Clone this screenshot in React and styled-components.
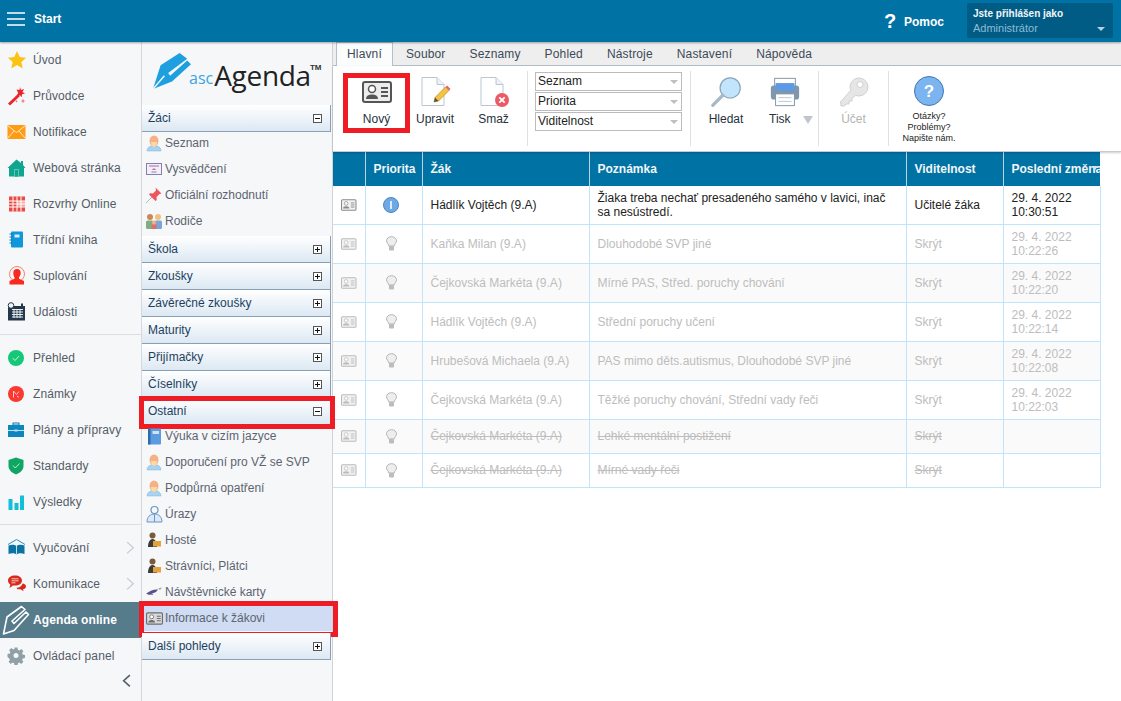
import React from "react"
import styled, { createGlobalStyle } from "styled-components"

const GlobalStyle = createGlobalStyle`
  html, body { margin: 0; padding: 0; height: 100%; overflow: hidden; }
  body { font-family: "Liberation Sans", Arial, sans-serif; font-size: 12px; background: #fff; }
  #root { height: 100%; }
`

/* ---------- icons ---------- */

const Star = () => (
  <svg width="20" height="20" viewBox="0 0 20 20">
    <path d="M10 1l2.700 6 6.500.7-4.900 4.300 1.400 6.400L10 15.100l-5.700 3.300 1.400-6.400L.8 7.700 7.300 7z" fill="#fcc314" />
  </svg>
)
const Wand = () => (
  <svg width="20" height="20" viewBox="0 0 20 20">
    <path d="M1 17.500L11 8l2 2L3 19.500z" fill="#e8262a" />
    <path d="M13 1l1 3 3-1-1.500 3 2.500 1.500-3 .7-.3 3-2-2.200-3 .8 1.500-2.700L9.500 3.500l3 .5z" fill="#e8262a" />
    <path d="M16 12.500l.6 1.900 1.900.6-1.900.6-.6 1.900-.6-1.900-1.900-.6 1.900-.6zM9.500 14l.4 1 1 .4-1 .4-.4 1-.4-1-1-.4 1-.4z" fill="#e8646a" />
  </svg>
)
const Mail = () => (
  <svg width="20" height="20" viewBox="0 0 20 20">
    <rect x="0.500" y="3" width="18" height="14" fill="#ff9c14" />
    <path d="M.5 3.500l9 7 9-7M.5 16.500l6.500-7.500M18.500 16.500L12 9" fill="none" stroke="#ffe9c4" strokeWidth="1" />
  </svg>
)
const House = () => (
  <svg width="20" height="20" viewBox="0 0 20 20">
    <path d="M9.500 1.500L14 5V3h2v4l2.500 3H17v8.500H2V10H.5z" fill="#0fa58e" />
    <rect x="7" y="11" width="5" height="7.500" fill="#5fc6b6" />
    <rect x="8" y="12" width="3" height="6.500" fill="#0fa58e" />
  </svg>
)
const Timetable = () => (
  <svg width="20" height="20" viewBox="0 0 20 20">
    <rect x="2" y="2.500" width="16" height="15" fill="#e84a44" />
    <rect x="10" y="7" width="8" height="5.500" fill="#f4aaa6" />
    <path d="M2 7h16M2 10h16M2 13h16M6 2.500v15M10 2.500v15M14 2.500v15" stroke="#fff" strokeWidth="1" />
  </svg>
)
const Notebook = () => (
  <svg width="20" height="20" viewBox="0 0 20 20">
    <rect x="4" y="1.500" width="12" height="16" rx="1" fill="#0f97dc" />
    <path d="M2.500 4h3M2.500 7h3M2.500 10h3M2.500 13h3" stroke="#0a79b5" strokeWidth="1" />
    <rect x="7.500" y="4.500" width="5" height="3" fill="#d6eefb" />
  </svg>
)
const Substitute = () => (
  <svg width="20" height="20" viewBox="0 0 20 20">
    <circle cx="10" cy="8" r="7.500" fill="none" stroke="#ff7d70" strokeWidth="1" />
    <path d="M10 3c2.500 0 4 2 3.700 4.500-.2 1.800-1 3-1.700 3.700v1.500l5 2.300v3.500H2.500V15l5-2.300v-1.500C6.800 10.500 6.500 9.300 6.300 7.500 6 5 7.500 3 10 3z" fill="#f92a1c" />
  </svg>
)
const CalendarClock = () => (
  <svg width="20" height="20" viewBox="0 0 20 20">
    <rect x="1" y="4" width="17" height="14.500" fill="#23394b" />
    <path d="M5 7.500h11M5 10h11M5 12.500h11M5 15h11M7 7v9M10 7v9M13 7v9" stroke="#e8edf0" strokeWidth="1" />
    <circle cx="4" cy="3.500" r="2.800" fill="#f6f7f9" stroke="#23394b" />
    <rect x="14" y="1.500" width="2" height="3.500" fill="#23394b" />
  </svg>
)
const Check = () => (
  <svg width="18" height="18" viewBox="0 0 18 18">
    <circle cx="9" cy="9" r="8" fill="#14c878" />
    <path d="M5.800 9.200l2.200 2.300 4-4.500" fill="none" stroke="#c8f4df" strokeWidth="1" />
  </svg>
)
const Marks = () => (
  <svg width="18" height="18" viewBox="0 0 18 18">
    <circle cx="9" cy="9" r="8" fill="#fa3a30" />
    <path d="M6.500 12.500V6l3 3.500L12 6.500M10 11l2 1.500" fill="none" stroke="#ffc9c5" strokeWidth="1" />
  </svg>
)
const Briefcase = () => (
  <svg width="18" height="18" viewBox="0 0 18 18">
    <rect x="6" y="2" width="6" height="2" fill="none" stroke="#0a7cb3" />
    <rect x="1" y="4" width="16" height="12" fill="#0d86c0" />
    <path d="M1 9.500h16" stroke="#bfe2f3" />
    <rect x="7.500" y="8.500" width="3" height="2" fill="#bfe2f3" />
  </svg>
)
const Shield = () => (
  <svg width="18" height="18" viewBox="0 0 18 18">
    <path d="M9 .5l7.500 2.500v6c0 4-3.500 7-7.500 8.500C5 16 1.500 13 1.500 9V3z" fill="#0fa564" />
    <path d="M6 8.500l2.300 2.500L12.500 6.500" fill="none" stroke="#b9ecd4" strokeWidth="1" />
  </svg>
)
const Bars = () => (
  <svg width="18" height="18" viewBox="0 0 18 18">
    <rect x="1.500" y="6" width="4" height="11" fill="#12bfd6" />
    <rect x="7.500" y="10" width="4" height="7" fill="#12bfd6" />
    <rect x="13" y="2.500" width="4" height="14.500" fill="#12bfd6" />
  </svg>
)
const OpenBook = () => (
  <svg width="20" height="20" viewBox="0 0 20 20">
    <path d="M1 6.500L9.500 1.500 18 6.500" fill="none" stroke="#1d8ec9" strokeWidth="1" />
    <path d="M1.500 7.500c3-1 6-1 8 .5 2-1.500 5-1.500 8-.5V16c-3-1-6-1-8 .5-2-1.500-5-1.500-8-.5z" fill="#0b72a6" />
    <path d="M9.500 8v8.500" stroke="#bfe2f3" />
  </svg>
)
const Chat = () => (
  <svg width="20" height="20" viewBox="0 0 20 20">
    <path d="M8 1.500c4 0 7 2 7 5s-3 5-7 5H6l-3.500 2.500.8-3.500C1.800 9.500 1 8 1 6.500c0-3 3-5 7-5z" fill="#d82a1c" />
    <path d="M4.500 4.800h7M4.500 6.800h7M4.500 8.800h4" stroke="#f9c8c2" />
    <path d="M15.500 9.500c2 .3 3.500 1.300 3.500 3 0 1.500-1.200 2.500-3 2.800l.5 2-3-2h-3l-1-1.500c3 0 5.500-1.700 6-4.300z" fill="#d82a1c" />
  </svg>
)
// the pen mark of the logo: a point and slanted bands
const PencilLogo = () => (
  <svg width="38" height="38" viewBox="0 0 40 38">
    <path d="M0 38L8 13 28 0l8 6-20 15 2 3L36 8l4 4-20 18z" fill="#1d9fe0" />
    <path d="M0 38L12 24" stroke="#f6f7f9" strokeWidth="1.500" />
  </svg>
)
// same mark as a white outline for the sidebar item
const PencilOutline = () => (
  <svg width="28" height="30" viewBox="0 0 28 30">
    <path
      d="M1.500 29L5 12 19.500 1.500l3.500 3-13 11.500 2 2.500L24 7l2.500 2.500L12 25.500z"
      fill="none"
      stroke="#fff"
      strokeWidth="1.600"
      strokeLinejoin="round"
    />
  </svg>
)
const Gear = () => (
  <svg width="18" height="18" viewBox="0 0 18 18">
    <path
      d="M7.500 1h3l.4 2.300 1.500.6 1.900-1.300 2.100 2.100-1.300 1.900.6 1.500 2.300.4v3l-2.300.4-.6 1.500 1.300 1.900-2.100 2.100-1.900-1.300-1.500.6-.4 2.300h-3l-.4-2.300-1.500-.6-1.900 1.300-2.100-2.100 1.300-1.900-.6-1.500L.5 10.500v-3l2.300-.4.6-1.500L2.100 3.700l2.100-2.100 1.900 1.300 1.500-.6z"
      fill="#8fa1a6"
      transform="translate(0 -.5)"
    />
    <circle cx="9" cy="8.500" r="2.500" fill="#f6f7f9" />
  </svg>
)

const Person = () => (
  <svg width="16" height="18" viewBox="0 0 16 18">
    <path d="M1 17c0-3 2-4.500 4-5h6c2 .5 4 2 4 5z" fill="#a6d3ef" stroke="#7db4d6" strokeWidth=".5" />
    <ellipse cx="8" cy="7" rx="4.500" ry="5.500" fill="#f4b184" />
    <path d="M5 8c0 3 1.500 5 3 5s3-2 3-5z" fill="#fbd9a8" />
  </svg>
)
const Certificate = () => (
  <svg width="18" height="18" viewBox="0 0 18 18">
    <rect x="1.500" y="3.500" width="15" height="11" fill="#f3eff8" stroke="#8c7bab" strokeWidth="1" />
    <path d="M4 6h10" stroke="#8c7bab" />
    <path d="M9 8l2.500 2H6.500z" fill="#e2748c" />
    <path d="M6.500 12h5" stroke="#6a8fc4" />
  </svg>
)
const Pin = () => (
  <svg width="18" height="18" viewBox="0 0 18 18">
    <path d="M1 17l6-6" stroke="#b7b9bd" strokeWidth="1" />
    <path d="M10.500 1.500l6 6-2 .5-3 3 .2 3-1.200 1-6.500-6.500 1-1.200 3 .2 3-3z" fill="#f0555c" />
  </svg>
)
const Family = () => (
  <svg width="18" height="18" viewBox="0 0 18 18">
    <circle cx="5" cy="5" r="3" fill="#c98a5a" />
    <rect x="1" y="8.500" width="7.500" height="8.500" rx="1.500" fill="#82ad83" />
    <circle cx="13" cy="5" r="3" fill="#f1c27b" />
    <rect x="9.500" y="8.500" width="7.500" height="8.500" rx="1.500" fill="#7aa5d6" />
    <circle cx="9" cy="10.500" r="2" fill="#f4b184" />
    <rect x="6.500" y="12.500" width="5" height="4.500" rx="1" fill="#e86a6a" />
  </svg>
)
const BlueBook = () => (
  <svg width="15" height="17" viewBox="0 0 15 17">
    <rect x="1" y="0.500" width="13" height="16" rx="1" fill="#5b9be0" />
    <rect x="1" y="0.500" width="2.500" height="16" fill="#2f6cae" />
    <rect x="5.500" y="3" width="6.500" height="3" fill="#cfe3f6" />
  </svg>
)
const Doctor = () => (
  <svg width="18" height="18" viewBox="0 0 18 18">
    <circle cx="9.500" cy="5" r="3.500" fill="none" stroke="#6b96c4" strokeWidth="1.200" />
    <path d="M2 17c0-5 3-8 7.500-8S17 12 17 17z" fill="#dbe8f5" stroke="#6b96c4" strokeWidth="1" />
    <path d="M9.500 9v8" stroke="#6b96c4" />
  </svg>
)
const Guest = () => (
  <svg width="14" height="16" viewBox="0 0 14 16">
    <circle cx="5.500" cy="3.500" r="3" fill="#7a5a3a" />
    <path d="M1 15c0-5 2-8 4.500-8S10 10 10 15z" fill="#3a3a3a" />
    <rect x="6" y="9" width="8" height="5.500" fill="#e2a33a" />
  </svg>
)
const VisitorCard = () => (
  <svg width="18" height="18" viewBox="0 0 18 18">
    <path d="M1 11c3-3 8-5 12-4.500L11 9l-6 2.500z" fill="#5a4f8c" />
    <path d="M13 5.500l4-1-2 2.500z" fill="#9a9ab0" />
    <path d="M3 11.500h5" stroke="#8a8aa0" />
  </svg>
)
const IdCard = ({ w = 18, h = 14, color = "#7d7d7d", bg = "#e8e8e8" }) => (
  <svg width={w} height={h} viewBox="0 0 30 22">
    <rect x="1" y="1" width="28" height="20" rx="2" fill={bg} stroke={color} strokeWidth="2" />
    <circle cx="10" cy="8" r="3.500" fill="#fff" stroke={color} strokeWidth="1.500" />
    <path d="M4 18c0-3 2-4.500 6-4.500S16 15 16 18z" fill={color} />
    <path d="M19 7h7M19 11h7M19 15h7" stroke={color} strokeWidth="1.800" />
  </svg>
)
const PlusMinus = ({ open }) => (
  <svg width="9" height="9" viewBox="0 0 9 9">
    <rect x=".5" y=".5" width="8" height="8" fill="#fff" stroke="#555" />
    <path d={open ? "M2 4.500h5" : "M2 4.500h5M4.500 2v5"} stroke="#111" />
  </svg>
)
const Bulb = () => (
  <svg width="11" height="15" viewBox="0 0 11 15">
    <path
      d="M5.500 .7C8.300 .7 10.500 2.500 10.500 4.800 10.500 6.700 8.700 7.700 8.200 10H2.800C2.300 7.700 .5 6.700 .5 4.800 .5 2.500 2.700 .7 5.500 .7z"
      fill="#eeeeee"
      stroke="#b5b5b5"
    />
    <rect x="3" y="10" width="5" height="4.500" rx="1" fill="#bcbcbc" />
  </svg>
)
const InfoDot = () => (
  <svg width="16" height="16" viewBox="0 0 16 16">
    <circle cx="8" cy="8" r="7.500" fill="#6ea9e4" stroke="#4a86c6" strokeWidth="1" />
    <rect x="7" y="4" width="2" height="8" fill="#dcecfb" />
  </svg>
)
const PageEdit = () => (
  <svg width="34" height="34" viewBox="0 0 34 34">
    <path d="M4 2.500h15l7 7v21H4z" fill="#fff" stroke="#bcc6d2" />
    <path d="M19 2.500v7h7" fill="#eef1f5" stroke="#bcc6d2" />
    <path d="M16 27l1-4.500L27.500 12l3.500 3.500L20.500 26z" fill="#f5c242" stroke="#b98a1f" strokeWidth=".7" />
    <path d="M16 27l1-4.500 3.500 3.500z" fill="#555" />
    <path d="M27.500 12l3.500 3.500 1.500-1.500-3.500-3.500z" fill="#e0626a" />
  </svg>
)
const PageDelete = () => (
  <svg width="34" height="34" viewBox="0 0 34 34">
    <path d="M4 2.500h15l7 7v21H4z" fill="#fff" stroke="#bcc6d2" />
    <path d="M19 2.500v7h7" fill="#eef1f5" stroke="#bcc6d2" />
    <circle cx="25" cy="25" r="7" fill="#ec5a66" />
    <path d="M22.300 22.300l5.400 5.400M27.700 22.300l-5.400 5.400" stroke="#fff" strokeWidth="1.800" />
  </svg>
)
const Magnifier = () => (
  <svg width="33" height="33" viewBox="0 0 36 36">
    <circle cx="22" cy="13" r="11" fill="#c3e5fb" stroke="#87a5bb" strokeWidth="1.300" />
    <path d="M14 21L3 32" stroke="#a8b8c6" strokeWidth="3.500" strokeLinecap="round" />
  </svg>
)
const Printer = () => (
  <svg width="32" height="32" viewBox="0 0 34 34">
    <rect x="6" y="2.500" width="22" height="10" fill="#fff" stroke="#7f93a6" />
    <rect x="2" y="10" width="30" height="15" rx="3" fill="#7f96ab" />
    <rect x="7" y="7.500" width="20" height="8.500" fill="#5d9ce4" />
    <rect x="7" y="19" width="20" height="12.500" fill="#fff" stroke="#7f93a6" />
    <path d="M10 23h14M10 27h14" stroke="#b7c4d0" />
  </svg>
)
const Key = () => (
  <svg width="32" height="32" viewBox="0 0 32 32">
    <path
      d="M21 2a9 9 0 0 1 0 18c-1.300 0-2.500-.3-3.500-.8L14 22.500v2.500h-3v3H8l-1.500 2H3l-.5-4L13 14c-.5-1-1-2-1-3a9 9 0 0 1 9-9z"
      fill="#e6e6e6"
      stroke="#d0d0d0"
    />
    <circle cx="22" cy="8.500" r="3" fill="#fff" stroke="#d0d0d0" />
  </svg>
)
const HelpBubble = () => (
  <svg width="30" height="30" viewBox="0 0 30 30">
    <circle cx="15" cy="15" r="14.500" fill="#7bb4ee" stroke="#3f78b4" strokeWidth="1" />
    <text x="15" y="21" fontSize="17" fontWeight="700" fill="#fff" textAnchor="middle" fontFamily="Liberation Sans">?</text>
  </svg>
)
const Burger = () => (
  <svg width="18" height="14" viewBox="0 0 18 14">
    <path d="M0 1h18M0 7h18M0 13h18" stroke="#fff" strokeWidth="1.500" />
  </svg>
)
const Chevron = ({ size = 9, color = "#c9cdd1", left, weight = 1.2 }) => (
  <svg width={size} height={size * 1.5} viewBox="0 0 8 12">
    <path d={left ? "M7 1L1.500 6 7 11" : "M1 1l5.500 5L1 11"} fill="none" stroke={color} strokeWidth={weight} />
  </svg>
)

/* ---------- data ---------- */

const navTop = [
  ["Úvod", <Star />],
  ["Průvodce", <Wand />],
  ["Notifikace", <Mail />],
  ["Webová stránka", <House />],
  ["Rozvrhy Online", <Timetable />],
  ["Třídní kniha", <Notebook />],
  ["Suplování", <Substitute />],
  ["Události", <CalendarClock />],
]
const navMiddle = [
  ["Přehled", <Check />],
  ["Známky", <Marks />],
  ["Plány a přípravy", <Briefcase />],
  ["Standardy", <Shield />],
  ["Výsledky", <Bars />],
]

const rows = [
  { name: "Hádlík Vojtěch (9.A)", note: "Žiaka treba nechať presadeného samého v lavici, inač sa nesústredí.", vis: "Učitelé žáka", date: "29. 4. 2022", time: "10:30:51", active: true },
  { name: "Kaňka Milan (9.A)", note: "Dlouhodobé SVP jiné", vis: "Skrýt", date: "29. 4. 2022", time: "10:22:26" },
  { name: "Čejkovská Markéta (9.A)", note: "Mírné PAS, Střed. poruchy chování", vis: "Skrýt", date: "29. 4. 2022", time: "10:22:20" },
  { name: "Hádlík Vojtěch (9.A)", note: "Střední poruchy učení", vis: "Skrýt", date: "29. 4. 2022", time: "10:22:14" },
  { name: "Hrubešová Michaela (9.A)", note: "PAS mimo děts.autismus, Dlouhodobé SVP jiné", vis: "Skrýt", date: "29. 4. 2022", time: "10:22:08" },
  { name: "Čejkovská Markéta (9.A)", note: "Těžké poruchy chování, Střední vady řeči", vis: "Skrýt", date: "29. 4. 2022", time: "10:22:03" },
  { name: "Čejkovská Markéta (9.A)", note: "Lehké mentální postižení", vis: "Skrýt", struck: true },
  { name: "Čejkovská Markéta (9.A)", note: "Mírné vady řeči", vis: "Skrýt", struck: true },
]

/* ---------- layout ---------- */

const Page = styled.div`
  width: 1121px;
  height: 701px;
  display: flex;
  flex-direction: column;
  overflow: hidden;
`
const TopBar = styled.header`
  height: 42px;
  flex: none;
  background: #0072a4;
  display: flex;
  align-items: center;
  color: #fff;
  box-shadow: 0 1px 2px rgba(0, 0, 0, 0.35);
  position: relative;
  z-index: 3;
`
const Hamburger = styled.div`
  width: 34px;
  padding: 0 0 4px 7px;
  box-sizing: border-box;
  display: flex;
`
const StartLabel = styled.span`
  font-size: 12px;
  font-weight: 700;
  margin-top: -4px;
`
const HelpLink = styled.div`
  margin-left: auto;
  display: flex;
  align-items: center;
  font-weight: 700;
  font-size: 12px;
  margin-right: 23px;
  padding-top: 1px;
`
const HelpMark = styled.span`
  font-size: 20px;
  font-weight: 700;
  margin-right: 10px;
  width: 10px;
`
const UserBox = styled.div`
  width: 146px;
  height: 35px;
  margin: 0 8px 1px 0;
  background: #005c85;
  border-radius: 2px;
  box-sizing: border-box;
  padding: 4px 6px 0;
  position: relative;
`
const UserTitle = styled.div`
  font-size: 10px;
  font-weight: 700;
  line-height: 14px;
  color: #f2f6f8;
`
const UserName = styled.div`
  font-size: 11px;
  line-height: 14px;
  color: #8cbbd5;
`
const DropCaret = styled.span`
  position: absolute;
  right: 8px;
  bottom: 7px;
  border: 4px solid transparent;
  border-top: 4px solid #b5cfde;
  border-bottom: 0;
`
const Body = styled.div`
  flex: 1;
  display: flex;
  min-height: 0;
`
const Nav = styled.nav`
  width: 142px;
  flex: none;
  background: #f6f7f9;
  border-right: 1px solid #d6d8da;
  box-sizing: border-box;
  display: flex;
  flex-direction: column;
`
const NavItem = styled.div`
  height: 36px;
  flex: none;
  display: flex;
  align-items: center;
  color: ${(p) => (p.$active ? "#fff" : "#555c66")};
  font-weight: ${(p) => (p.$active ? 700 : 400)};
  background: ${(p) => (p.$active ? "#567b8b" : "transparent")};
  font-size: 12px;
  letter-spacing: 0.1px;
`
const NavIcon = styled.span`
  width: 33px;
  padding-left: ${(p) => p.$left ?? 7}px;
  box-sizing: border-box;
  flex: none;
  display: flex;
`
const NavArrow = styled.span`
  margin-left: auto;
  margin-right: 6px;
  display: flex;
`
const NavRule = styled.div`
  height: 1px;
  background: #dcdee0;
  margin: 4px 0 5px;
  flex: none;
`
const CollapseRow = styled.div`
  display: flex;
  justify-content: flex-end;
  padding: 0 10px 0 0;
`
const Side = styled.aside`
  width: 191px;
  flex: none;
  background: #f6f7f9;
  border-right: 1px solid #cfd2d6;
  box-sizing: border-box;
  display: flex;
  flex-direction: column;
`
const Logo = styled.div`
  height: 63px;
  flex: none;
  display: flex;
  align-items: flex-end;
  padding: 0 0 15px 11px;
  box-sizing: border-box;
`
const LogoAsc = styled.span`
  font-family: "Open Sans", "Liberation Sans", sans-serif;
  font-size: 16px;
  line-height: 17px;
  color: #38a6e0;
  margin: 0 1px 3px -2px;
`
const LogoWord = styled.span`
  font-family: "Open Sans", "Liberation Sans", sans-serif;
  font-size: 28px;
  line-height: 30px;
  color: #222;
  letter-spacing: -0.3px;
`
const LogoTm = styled.span`
  font-size: 8px;
  font-weight: 700;
  color: #333;
  align-self: flex-start;
  margin: 21px 0 0 -1px;
`
const GroupHead = styled.div`
  height: 27px;
  flex: none;
  width: 189px;
  box-sizing: border-box;
  display: flex;
  align-items: center;
  justify-content: space-between;
  padding: 0 8px 0 6px;
  background: linear-gradient(to bottom, #ffffff, #dce8f3);
  border-bottom: 1px solid #87a0b4;
  border-right: 1px solid #87a0b4;
  font-size: 12px;
  color: #1d3f5e;
  position: relative;
  ${(p) =>
    p.$marked &&
    `&::after {
      content: "";
      position: absolute;
      inset: -2px -5px -5px -3px;
      border: 5px solid #ee1c25;
      pointer-events: none;
    }`}
`
const GroupItem = styled.div`
  height: 26px;
  flex: none;
  display: flex;
  align-items: center;
  gap: 2px;
  padding-left: 3px;
  color: #5d6470;
  font-size: 12px;
  position: relative;
  background: ${(p) => (p.$selected ? "#cfdcf3" : "transparent")};
  ${(p) =>
    p.$marked &&
    `&::after {
      content: "";
      position: absolute;
      inset: -4px -6px -6px -3px;
      border: 5px solid #ee1c25;
      pointer-events: none;
    }`}
`
const GroupIcon = styled.span`
  width: 18px;
  height: 18px;
  flex: none;
  display: flex;
  align-items: center;
  justify-content: center;
`
const ItemList = styled.div`
  display: flex;
  flex-direction: column;
  padding-bottom: ${(p) => p.$pad || 0}px;
  margin-top: ${(p) => p.$top || 0}px;
`
const Main = styled.main`
  flex: 1;
  min-width: 0;
  display: flex;
  flex-direction: column;
  background: #fff;
`
const Tabs = styled.div`
  height: 24px;
  flex: none;
  background: #eeeeee;
  border-bottom: 1px solid #b4c0ca;
  box-sizing: border-box;
  display: flex;
  align-items: flex-end;
  padding-left: 3px;
`
const Tab = styled.div`
  height: 22px;
  box-sizing: border-box;
  padding: 0 ${(p) => (p.$active ? 10 : 9)}px;
  margin-right: ${(p) => (p.$active ? 4 : 6)}px;
  color: #3c4a58;
  font-size: 12px;
  line-height: 23px;
  letter-spacing: 0.15px;
  ${(p) =>
    p.$active &&
    `background: #fafcfe;
     border: 1px solid #b4c0ca;
     border-bottom: 0;
     margin-bottom: -1px;
     height: 24px;`}
`
const Ribbon = styled.div`
  height: 86px;
  flex: none;
  display: flex;
  background: #fff;
  padding-left: 10px;
  box-sizing: border-box;
  border-bottom: 1px solid #c7cbcf;
  box-shadow: 0 1px 2px rgba(0, 0, 0, 0.2);
  position: relative;
  z-index: 2;
`
const RibbonButton = styled.div`
  width: ${(p) => p.$w || 58}px;
  flex: none;
  display: flex;
  flex-direction: column;
  align-items: ${(p) => (p.$inset ? "flex-start" : "center")};
  padding-top: ${(p) => p.$top ?? 8}px;
  padding-left: ${(p) => p.$inset || 0}px;
  box-sizing: border-box;
  font-size: 12px;
  color: ${(p) => (p.$off ? "#b3b3b3" : "#26323c")};
  position: relative;
  ${(p) =>
    p.$marked &&
    `&::after {
      content: "";
      position: absolute;
      left: 0;
      top: 7px;
      width: 67px;
      height: 60px;
      box-sizing: border-box;
      border: 5px solid #ee1c25;
      pointer-events: none;
    }`}
`
const RibbonIcon = styled.div`
  height: ${(p) => p.$h || 36}px;
  display: flex;
  align-items: center;
  justify-content: center;
`
const RibbonLabel = styled.div`
  margin-top: 2px;
  line-height: 14px;
  display: flex;
  align-items: center;
`
const RibbonRule = styled.div`
  width: 1px;
  background: #e0e0e0;
  margin: 5px 0;
  flex: none;
`
const Selects = styled.div`
  width: 147px;
  padding: 6px 0 0 7px;
  margin-right: 8px;
  display: flex;
  flex-direction: column;
  gap: 1px;
  flex: none;
`
const Select = styled.div`
  height: 19px;
  width: 147px;
  border: 1px solid #bcbcbc;
  box-sizing: border-box;
  padding-left: 2px;
  line-height: 17px;
  font-size: 12px;
  color: #222;
  position: relative;
  &::after {
    content: "";
    position: absolute;
    right: 3px;
    top: 7px;
    border: 4px solid transparent;
    border-top: 4px solid #bfbfbf;
    border-bottom: 0;
  }
`
const TinyCaret = styled.span`
  border: 5px solid transparent;
  border-top: 8px solid #c0c6cc;
  border-bottom: 0;
  margin-left: 12px;
  margin-top: 2px;
`
const AskText = styled.div`
  font-size: 9px;
  line-height: 11px;
  text-align: center;
  color: #222;
  margin-top: 5px;
  white-space: nowrap;
`
const Grid = styled.table`
  border-collapse: collapse;
  table-layout: fixed;
  width: 767px;
`
const Th = styled.th`
  height: 34px;
  padding: 0 0 0 8px;
  box-sizing: border-box;
  background: #0072a4;
  color: #f2f6f8;
  font-size: 12px;
  font-weight: 700;
  text-align: left;
  white-space: nowrap;
  overflow: hidden;
  border-left: 1px solid #bcd4e2;
  position: relative;
  &:first-child {
    border-left: 0;
  }
  ${(p) =>
    p.$sorted &&
    `&::after {
      content: "";
      position: absolute;
      right: 2px;
      top: 14px;
      border: 3px solid transparent;
      border-top: 4px solid #d5e6ef;
      border-bottom: 0;
    }`}
`
const Tr = styled.tr`
  background: ${(p) => (p.$even ? "#fafafa" : "#fff")};
`
const Td = styled.td`
  height: ${(p) => p.$h}px;
  padding: 0 8px;
  box-sizing: border-box;
  border: 1px solid #c0e4fb;
  border-top: 0;
  font-size: 12px;
  line-height: 14px;
  color: ${(p) => (p.$active ? "#222" : "#bdbdbd")};
  text-decoration: ${(p) => (p.$struck ? "line-through" : "none")};
  &:first-child {
    border-left: 0;
  }
`
const IconCell = styled.div`
  display: flex;
  justify-content: center;
  align-items: center;
  padding-right: ${(p) => p.$shift || 0}px;
`

const widths = [32, 57, 167, 317, 97, 97]

const rowHeight = (r, i) => (r.struck ? 34 : i === 0 ? 38 : 39)

const App = () => (
  <Page>
    <GlobalStyle />
    <TopBar>
      <Hamburger><Burger /></Hamburger>
      <StartLabel>Start</StartLabel>
      <HelpLink>
        <HelpMark>?</HelpMark>
        Pomoc
      </HelpLink>
      <UserBox>
        <UserTitle>Jste přihlášen jako</UserTitle>
        <UserName>Administrátor</UserName>
        <DropCaret />
      </UserBox>
    </TopBar>
    <Body>
      <Nav>
        {navTop.map(([label, icon]) => (
          <NavItem key={label}><NavIcon>{icon}</NavIcon>{label}</NavItem>
        ))}
        <NavRule />
        {navMiddle.map(([label, icon]) => (
          <NavItem key={label}><NavIcon>{icon}</NavIcon>{label}</NavItem>
        ))}
        <NavRule />
        <NavItem><NavIcon><OpenBook /></NavIcon>Vyučování<NavArrow><Chevron /></NavArrow></NavItem>
        <NavItem><NavIcon><Chat /></NavIcon>Komunikace<NavArrow><Chevron /></NavArrow></NavItem>
        <NavItem $active><NavIcon $left={2}><PencilOutline /></NavIcon>Agenda online</NavItem>
        <NavItem><NavIcon><Gear /></NavIcon>Ovládací panel</NavItem>
        <CollapseRow><Chevron color="#55636e" left weight={1.5} /></CollapseRow>
      </Nav>
      <Side>
        <Logo>
          <PencilLogo />
          <LogoAsc>asc</LogoAsc>
          <LogoWord>Agenda</LogoWord>
          <LogoTm>TM</LogoTm>
        </Logo>
        <GroupHead>Žáci<PlusMinus open /></GroupHead>
        <ItemList $pad={2} $top={-2}>
          <GroupItem><GroupIcon><Person /></GroupIcon>Seznam</GroupItem>
          <GroupItem><GroupIcon><Certificate /></GroupIcon>Vysvědčení</GroupItem>
          <GroupItem><GroupIcon><Pin /></GroupIcon>Oficiální rozhodnutí</GroupItem>
          <GroupItem><GroupIcon><Family /></GroupIcon>Rodiče</GroupItem>
        </ItemList>
        {["Škola", "Zkoušky", "Závěrečné zkoušky", "Maturity", "Přijímačky", "Číselníky"].map((g) => (
          <GroupHead key={g}>{g}<PlusMinus /></GroupHead>
        ))}
        <GroupHead $marked>Ostatní<PlusMinus open /></GroupHead>
        <ItemList $top={-2}>
          <GroupItem><GroupIcon><BlueBook /></GroupIcon>Výuka v cizím jazyce</GroupItem>
          <GroupItem><GroupIcon><Person /></GroupIcon>Doporučení pro VŽ se SVP</GroupItem>
          <GroupItem><GroupIcon><Person /></GroupIcon>Podpůrná opatření</GroupItem>
          <GroupItem><GroupIcon><Doctor /></GroupIcon>Úrazy</GroupItem>
          <GroupItem><GroupIcon><Guest /></GroupIcon>Hosté</GroupItem>
          <GroupItem><GroupIcon><Guest /></GroupIcon>Strávníci, Plátci</GroupItem>
          <GroupItem><GroupIcon><VisitorCard /></GroupIcon>Návštěvnické karty</GroupItem>
          <GroupItem $selected $marked><GroupIcon><IdCard w={17} h={13} color="#6c6c6c" bg="#d9d9d9" /></GroupIcon>Informace k žákovi</GroupItem>
        </ItemList>
        <ItemList $top={2}>
          <GroupHead>Další pohledy<PlusMinus /></GroupHead>
        </ItemList>
      </Side>
      <Main>
        <Tabs>
          {["Hlavní", "Soubor", "Seznamy", "Pohled", "Nástroje", "Nastavení", "Nápověda"].map((t, i) => (
            <Tab key={t} $active={i === 0}>{t}</Tab>
          ))}
        </Tabs>
        <Ribbon>
          <RibbonButton $w={67} $marked>
            <RibbonIcon><IdCard w={30} h={22} color="#555" bg="#ececec" /></RibbonIcon>
            <RibbonLabel>Nový</RibbonLabel>
          </RibbonButton>
          <RibbonButton $w={50}>
            <RibbonIcon><PageEdit /></RibbonIcon>
            <RibbonLabel>Upravit</RibbonLabel>
          </RibbonButton>
          <RibbonButton $w={67}>
            <RibbonIcon><PageDelete /></RibbonIcon>
            <RibbonLabel>Smaž</RibbonLabel>
          </RibbonButton>
          <RibbonRule />
          <Selects>
            <Select>Seznam</Select>
            <Select>Priorita</Select>
            <Select>Viditelnost</Select>
          </Selects>
          <RibbonRule />
          <RibbonButton $w={70}>
            <RibbonIcon><Magnifier /></RibbonIcon>
            <RibbonLabel>Hledat</RibbonLabel>
          </RibbonButton>
          <RibbonButton $w={57} $inset={8}>
            <RibbonIcon><Printer /></RibbonIcon>
            <RibbonLabel>Tisk<TinyCaret /></RibbonLabel>
          </RibbonButton>
          <RibbonRule />
          <RibbonButton $w={69} $off>
            <RibbonIcon><Key /></RibbonIcon>
            <RibbonLabel>Účet</RibbonLabel>
          </RibbonButton>
          <RibbonRule />
          <RibbonButton $w={80} $top={10}>
            <RibbonIcon $h={30}><HelpBubble /></RibbonIcon>
            <AskText>Otázky?<br />Problémy?<br />Napište nám.</AskText>
          </RibbonButton>
        </Ribbon>
        <Grid>
          <colgroup>
            {widths.map((w, i) => <col key={i} width={w} />)}
          </colgroup>
          <thead>
            <tr>
              <Th />
              <Th>Priorita</Th>
              <Th>Žák</Th>
              <Th>Poznámka</Th>
              <Th>Viditelnost</Th>
              <Th $sorted>Poslední změna</Th>
            </tr>
          </thead>
          <tbody>
            {rows.map((r, i) => {
              const h = rowHeight(r, i)
              const cell = { $h: h, $active: r.active, $struck: r.struck }
              return (
                <Tr key={i} $even={i % 2 === 0 && i > 0}>
                  <Td $h={h}><IconCell><IdCard w={16} h={12} color={r.active ? "#8a8a8a" : "#bbb"} bg="#f2f2f2" /></IconCell></Td>
                  <Td $h={h}><IconCell $shift={5}>{r.active ? <InfoDot /> : <Bulb />}</IconCell></Td>
                  <Td {...cell}>{r.name}</Td>
                  <Td {...cell}>{r.note}</Td>
                  <Td {...cell}>{r.vis}</Td>
                  <Td {...cell}>{r.date}{r.date && <br />}{r.time}</Td>
                </Tr>
              )
            })}
          </tbody>
        </Grid>
      </Main>
    </Body>
  </Page>
)

export default App
